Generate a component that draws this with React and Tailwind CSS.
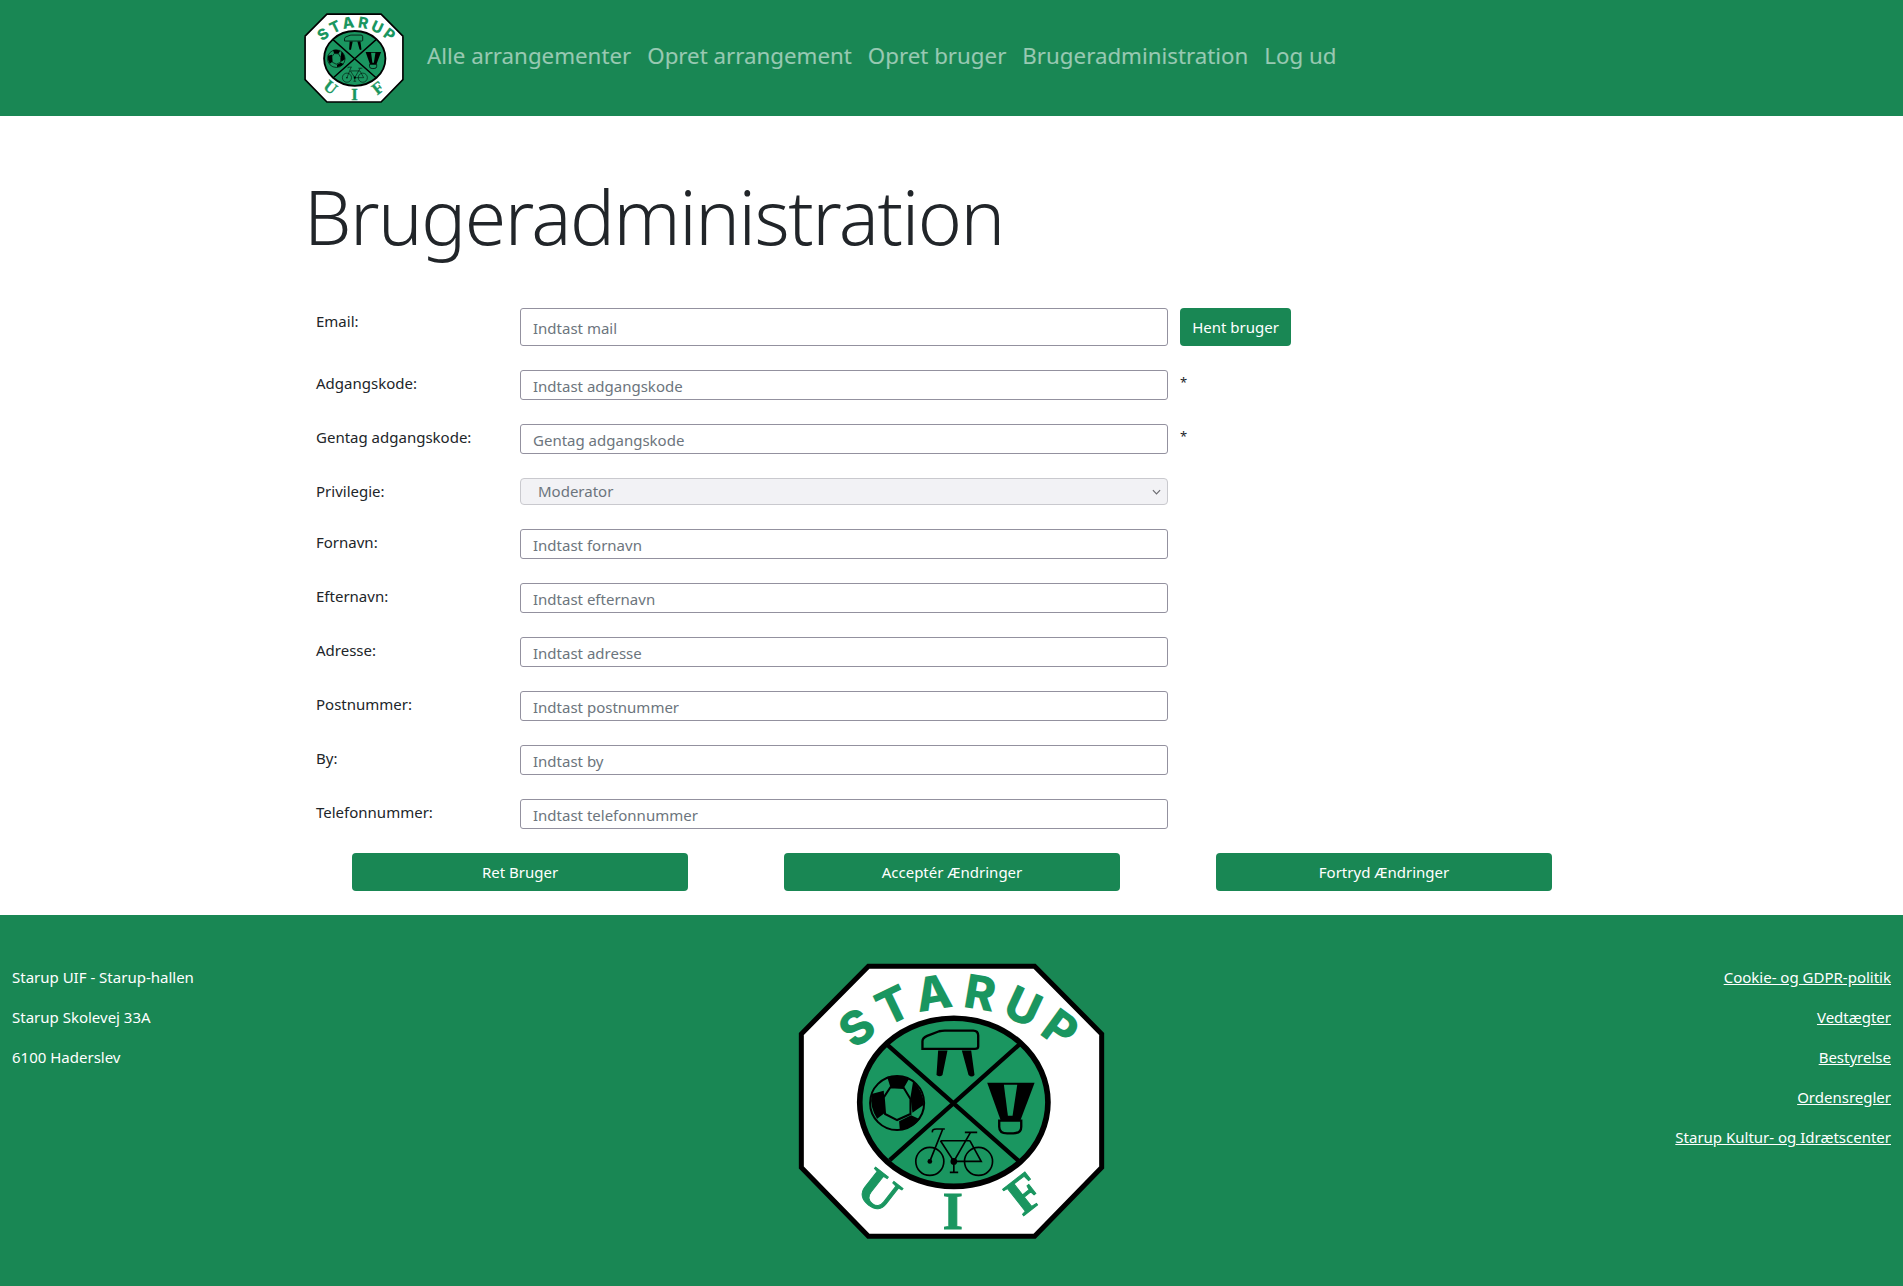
const font = { fontFamily: '"Noto Sans", sans-serif' };

// logo is traced from the footer version, numbers are in zoomed px
const Logo = ({ id, className }) => (
  <svg viewBox="55 38 920 826" className={className}>
    <polygon
      points="266,47 764,47 965,250 965,650 764,856 266,856 65,650 65,250"
      fill="#fff"
      stroke="#000"
      strokeWidth="15"
    />
    <defs>
      <path id={id} d="M 225 300 Q 515 50 825 285" />
    </defs>
    <text fill="#1a9660" fontFamily='Inter, sans-serif' fontWeight="800" fontSize="140">
      <textPath href={`#${id}`} textLength="690" lengthAdjust="spacing">
        STARUP
      </textPath>
    </text>
    <g
      fill="#1a9660"
      stroke="#1a9660"
      strokeWidth="3"
      fontFamily='"Liberation Serif", serif'
      fontWeight="700"
      fontSize="155"
      textAnchor="middle"
    >
      <text transform="translate(266,761) rotate(38)">U</text>
      <text x="519" y="836">I</text>
      <text transform="translate(766,768) rotate(-38)">F</text>
    </g>
    <ellipse cx="522" cy="455" rx="282" ry="252" fill="#1a9660" stroke="#000" strokeWidth="17" />
    <path d="M322 282 L718 632 M718 282 L330 628" stroke="#000" strokeWidth="13" />
    {/* pommel horse */}
    <path
      d="M428 295 V272 Q428 262 442 256 L478 242 Q486 240 495 240 H580 Q595 240 595 255 V288 Q595 295 585 295 H435 Q428 295 428 295 Z"
      fill="none"
      stroke="#000"
      strokeWidth="7"
    />
    <path d="M475 300 H503 L488 373 Q480 380 470 373 Z M546 300 H574 L584 373 Q576 382 566 373 Z" fill="#000" />
    {/* football */}
    <circle cx="352" cy="457" r="81" fill="#1a9660" stroke="#000" strokeWidth="6" />
    <path d="M322 378 Q352 372 388 384 L372 412 L332 410 Z M400 392 Q430 420 432 462 L398 486 L392 440 Z M275 430 L312 420 L316 486 L292 504 Q270 470 275 430 Z M358 512 L394 494 L420 506 Q396 535 360 537 Z" fill="#000" />
    <path d="M332 410 L372 412 L392 445 L392 490 L352 508 L316 490 L312 440 Z" fill="#1a9660" stroke="#000" strokeWidth="6" />
    {/* shuttlecock */}
    <path d="M622 396 H764 L722 508 H662 Z" fill="#000" />
    <path d="M672 402 H712 L698 495 H684 Z" fill="#1a9660" />
    <path d="M658 510 H724 V528 Q724 548 700 548 H682 Q658 548 658 528 Z" fill="#1a9660" stroke="#000" strokeWidth="7" />
    {/* bike */}
    <g fill="none" stroke="#000" strokeWidth="5">
      <circle cx="450" cy="632" r="42" />
      <circle cx="596" cy="632" r="42" />
      <path d="M450 632 L488 537 M458 545 Q455 535 470 535 H495 M482 570 H570 M482 570 L522 632 M522 632 L572 545 M555 545 H592 M570 570 L604 632 H522 M522 632 V665 M510 665 H535" />
    </g>
    <circle cx="450" cy="632" r="7" fill="#000" />
    <circle cx="522" cy="632" r="10" fill="#000" />
  </svg>
);

const navLinks = ["Alle arrangementer", "Opret arrangement", "Opret bruger", "Brugeradministration", "Log ud"];

const fields = [
  { label: "Adgangskode:", placeholder: "Indtast adgangskode", note: "*" },
  { label: "Gentag adgangskode:", placeholder: "Gentag adgangskode", note: "*" },
  { label: "Privilegie:", select: true },
  { label: "Fornavn:", placeholder: "Indtast fornavn" },
  { label: "Efternavn:", placeholder: "Indtast efternavn" },
  { label: "Adresse:", placeholder: "Indtast adresse" },
  { label: "Postnummer:", placeholder: "Indtast postnummer" },
  { label: "By:", placeholder: "Indtast by" },
  { label: "Telefonnummer:", placeholder: "Indtast telefonnummer" },
];

const footerLinks = ["Cookie- og GDPR-politik", "Vedtægter", "Bestyrelse", "Ordensregler", "Starup Kultur- og Idrætscenter"];

const App = () => {
  return (
    <div className="min-h-[1286px] flex flex-col bg-white text-[#212529]" style={font}>
      <nav className="h-[116px] bg-[#198754] pl-[304px] flex items-center">
        <Logo id="navArc" className="w-[100px] h-[90px] mr-[15px]" />
        <div className="flex pb-[5px]">
          {navLinks.map((link) => (
            <a key={link} href="#" className="px-2 text-[22.3px] leading-9 text-white/55">
              {link}
            </a>
          ))}
        </div>
      </nav>

      <main className="w-[1296px] ml-[304px] pb-6">
        <h1 className="h-[192px] pt-[52px] text-[75px] leading-[96px] tracking-[-1.45px] font-light">
          Brugeradministration
        </h1>
        <div className="flex flex-col gap-6">
          <div className="flex items-start">
            <label className="w-[216px] pl-3 pt-px text-[15px] leading-6">Email:</label>
            <input
              placeholder="Indtast mail"
              className="w-[648px] h-[38px] px-3 pt-px border border-[#93919f] rounded-[3px] text-[15px] placeholder:text-[#6c757d]"
            />
            <button className="ml-3 w-[111px] h-[38px] bg-[#198754] text-white text-[15px] rounded-[4px]">
              Hent bruger
            </button>
          </div>

          {fields.map((f) => (
            <div key={f.label} className="flex items-start">
              <label className="w-[216px] pl-3 pt-px text-[15px] leading-6">{f.label}</label>
              {f.select ? (
                <div className="relative w-[648px] h-[27px]">
                  <select
                    disabled
                    className="appearance-none w-full h-full pl-[17px] border border-[#c9c9ce] rounded-[4px] bg-[#f2f2f5] text-[15px] text-[#6c757d]"
                  >
                    <option>Moderator</option>
                  </select>
                  <svg viewBox="0 0 10 6" className="absolute right-[7px] top-[11px] w-[9px] h-[6px]">
                    <path d="M1 1 L5 5 L9 1" fill="none" stroke="#6b6b70" strokeWidth="1.3" />
                  </svg>
                </div>
              ) : (
                <input
                  placeholder={f.placeholder}
                  className="w-[648px] h-[30px] px-3 pt-0.5 border border-[#93919f] rounded-[3px] text-[15px] placeholder:text-[#6c757d]"
                />
              )}
              {f.note && <span className="ml-3 text-[13px] leading-6">{f.note}</span>}
            </div>
          ))}

          <div className="flex gap-[96px] pl-12">
            {["Ret Bruger", "Acceptér Ændringer", "Fortryd Ændringer"].map((b) => (
              <button key={b} className="w-[336px] h-[38px] bg-[#198754] text-white text-[15px] rounded-[4px]">
                {b}
              </button>
            ))}
          </div>
        </div>
      </main>

      <footer className="flex-1 bg-[#198754] text-white text-[15px] flex justify-between px-3 pt-[48px]">
        <div className="w-[400px] flex flex-col gap-[16px] leading-[24px] mt-0.5">
          <span>Starup UIF - Starup-hallen</span>
          <span>Starup Skolevej 33A</span>
          <span>6100 Haderslev</span>
        </div>
        <Logo id="footArc" className="w-[307px] h-[276px]" />
        <div className="w-[400px] flex flex-col items-end gap-[16px] leading-[24px] mt-0.5">
          {footerLinks.map((l) => (
            <a key={l} href="#" className="underline">
              {l}
            </a>
          ))}
        </div>
      </footer>
    </div>
  );
};

export default App;
